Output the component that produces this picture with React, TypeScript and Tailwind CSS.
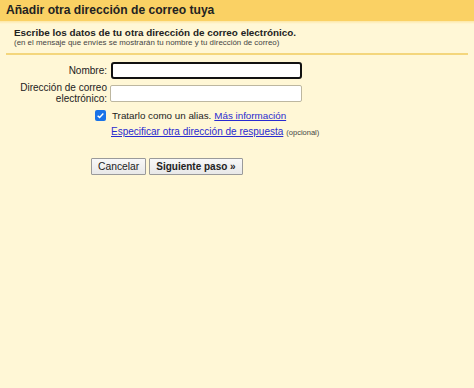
import React from "react";

const App: React.FC = () => {
  return (
    <div className="w-[474px] h-[388px] bg-[#fff7d6] font-['Liberation_Sans',Arial,sans-serif] text-[#222]">
      {/* Header */}
      <div className="h-[21px] bg-[#fad164] px-[6px] pt-[3px] text-[12.1px] font-bold leading-[15px] text-[#222]">
        Añadir otra dirección de correo tuya
      </div>
      <div className="h-[3px] bg-gradient-to-b from-[#fde7a6] to-[#fff7d6]" />

      {/* Intro */}
      <div className="px-[14px] pt-[3px] pb-[5px]">
        <div className="text-[9.9px] font-bold leading-[11px]">
          Escribe los datos de tu otra dirección de correo electrónico.
        </div>
        <div className="text-[7.9px] leading-[10px] text-[#444]">
          (en el mensaje que envíes se mostrarán tu nombre y tu dirección de correo)
        </div>
      </div>
      <div className="mx-[6px] h-[2px] bg-[#f4d67c]" />

      {/* Form */}
      <div className="grid grid-cols-[107px_auto] gap-x-[3px] pt-[6px] text-[10px] leading-[11px]">
        <label className="flex items-center justify-end">Nombre:</label>
        <div className="h-[18px] flex items-center">
          <input
            type="text"
            className="w-[191px] h-[17px] ml-[1px] rounded-[3px] border-2 border-[#111] bg-white outline-none"
          />
        </div>

        <label className="mt-[4px] text-right leading-[10.5px]">
          Dirección de correo
          <br />
          electrónico:
        </label>
        <div className="mt-[4px] flex items-center">
          <input
            type="text"
            className="w-[192px] h-[17px] rounded-[2px] border border-[#bdb7a0] bg-white outline-none"
          />
        </div>

        <div className="mt-[6px] flex items-center justify-end pr-[1px]">
          <span className="w-[11px] h-[11px] rounded-[2px] bg-[#1a73e8] flex items-center justify-center">
            <svg viewBox="0 0 12 12" className="w-[9px] h-[9px]">
              <path d="M2.2 6.2 L4.8 8.7 L9.8 3.4" stroke="white" strokeWidth="1.9" fill="none" />
            </svg>
          </span>
        </div>
        <div className="mt-[6px] pl-[2px] flex items-center text-[9.8px]">
          <span>Tratarlo como un alias.</span>
          <a className="ml-[3px] text-[#2a2ad0] underline">Más información</a>
        </div>

        <div />
        <div className="mt-[5px] pl-[1px] flex items-baseline">
          <a className="text-[#2a2ad0] underline">Especificar otra dirección de respuesta</a>
          <span className="ml-[3px] text-[7.5px] text-[#444]">(opcional)</span>
        </div>
      </div>

      {/* Buttons */}
      <div className="flex gap-[3px] pl-[91px] pt-[20px]">
        <button className="h-[17px] px-[6px] border border-[#9a9a9a] bg-gradient-to-b from-[#f8f8f8] to-[#e8e8e8] rounded-[1px] text-[10.3px] text-[#222]">
          Cancelar
        </button>
        <button className="h-[17px] px-[6px] border border-[#9a9a9a] bg-gradient-to-b from-[#f8f8f8] to-[#e8e8e8] rounded-[1px] text-[10px] font-bold text-[#222]">
          Siguiente paso »
        </button>
      </div>
    </div>
  );
};

export default App;
